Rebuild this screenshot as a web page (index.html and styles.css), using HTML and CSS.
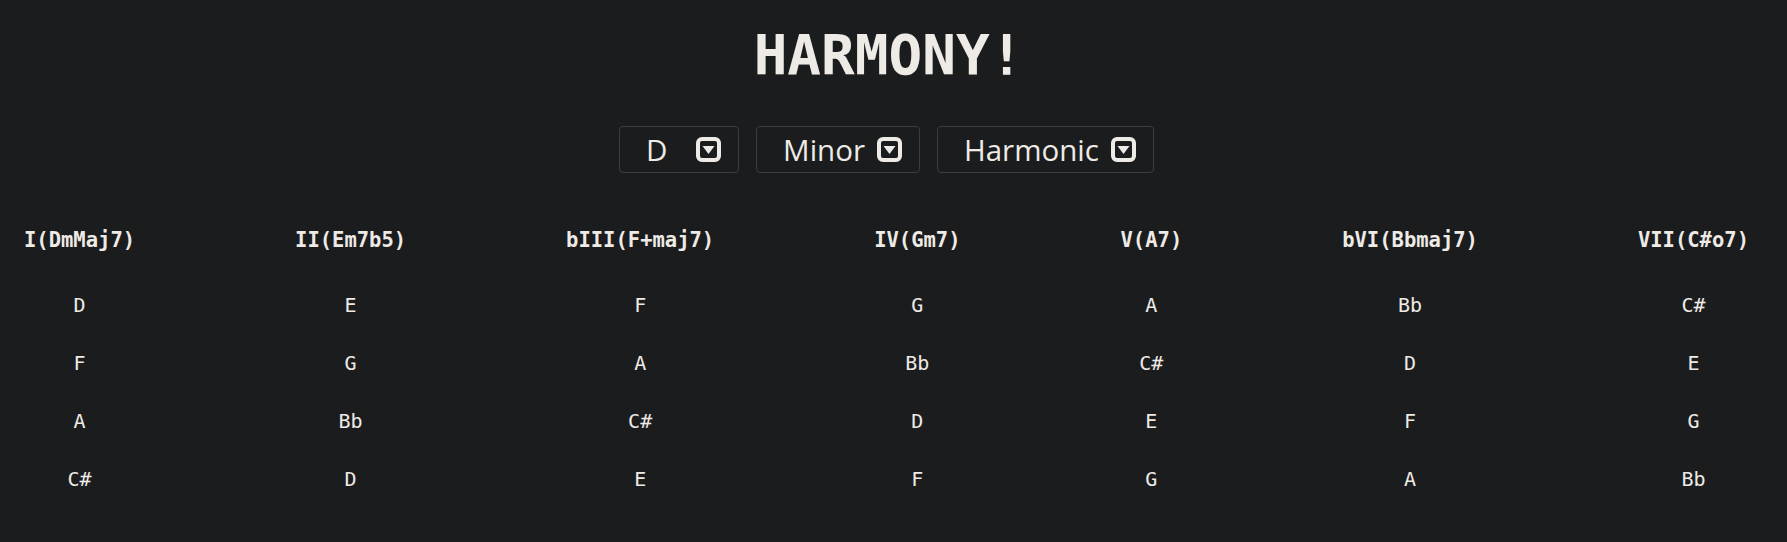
FILE: index.html
```html
<!DOCTYPE html>
<html lang="en">
<head>
<meta charset="utf-8">
<title>HARMONY!</title>
<link rel="stylesheet" href="styles.css">
</head>
<body>
<h1 class="title">HARMONY!</h1>
<div class="controls">
  <div class="select">
    <span class="select-text select-text--key">D</span>
    <svg class="arrow" viewBox="0 0 25 25" width="25" height="25"><rect x="2" y="2" width="21" height="21" rx="4" fill="#1b1c1e" stroke="#eeeae5" stroke-width="4"/><path d="M6.5 9 L18.5 9 L12.5 17 Z" fill="#eeeae5"/></svg>
  </div>
  <div class="select">
    <span class="select-text">Minor</span>
    <svg class="arrow" viewBox="0 0 25 25" width="25" height="25"><rect x="2" y="2" width="21" height="21" rx="4" fill="#1b1c1e" stroke="#eeeae5" stroke-width="4"/><path d="M6.5 9 L18.5 9 L12.5 17 Z" fill="#eeeae5"/></svg>
  </div>
  <div class="select">
    <span class="select-text">Harmonic</span>
    <svg class="arrow" viewBox="0 0 25 25" width="25" height="25"><rect x="2" y="2" width="21" height="21" rx="4" fill="#1b1c1e" stroke="#eeeae5" stroke-width="4"/><path d="M6.5 9 L18.5 9 L12.5 17 Z" fill="#eeeae5"/></svg>
  </div>
</div>
<div class="chords">
  <div class="chord">
    <div class="chord-name">I(DmMaj7)</div>
    <div class="note">D</div><div class="note">F</div><div class="note">A</div><div class="note">C#</div>
  </div>
  <div class="chord">
    <div class="chord-name">II(Em7b5)</div>
    <div class="note">E</div><div class="note">G</div><div class="note">Bb</div><div class="note">D</div>
  </div>
  <div class="chord">
    <div class="chord-name">bIII(F+maj7)</div>
    <div class="note">F</div><div class="note">A</div><div class="note">C#</div><div class="note">E</div>
  </div>
  <div class="chord">
    <div class="chord-name">IV(Gm7)</div>
    <div class="note">G</div><div class="note">Bb</div><div class="note">D</div><div class="note">F</div>
  </div>
  <div class="chord">
    <div class="chord-name">V(A7)</div>
    <div class="note">A</div><div class="note">C#</div><div class="note">E</div><div class="note">G</div>
  </div>
  <div class="chord">
    <div class="chord-name">bVI(Bbmaj7)</div>
    <div class="note">Bb</div><div class="note">D</div><div class="note">F</div><div class="note">A</div>
  </div>
  <div class="chord">
    <div class="chord-name">VII(C#o7)</div>
    <div class="note">C#</div><div class="note">E</div><div class="note">G</div><div class="note">Bb</div>
  </div>
</div>
</body>
</html>
```
FILE: styles.css
```css
html, body {
  margin: 0;
  padding: 0;
  background: #1b1c1e;
  color: #eeeae5;
  font-family: "DejaVu Sans Mono", monospace;
}

body {
  padding-top: 20px;
}

.title {
  margin: 0;
  padding-right: 10px;
  font-size: 56px;
  line-height: 70px;
  font-weight: bold;
  text-align: center;
}

.controls {
  margin-top: 36px;
  display: flex;
  justify-content: center;
  gap: 17px;
  padding-right: 14px;
}

.select {
  height: 47px;
  box-sizing: border-box;
  border: 1px solid #3c3d40;
  border-radius: 4px;
  display: flex;
  align-items: center;
  gap: 12px;
  padding: 0 17px 0 26px;
  font-family: "Open Sans", "Noto Sans", sans-serif;
  font-size: 29.5px;
}

.select-text--key {
  min-width: 38px;
}

.arrow {
  display: block;
  flex: none;
}

.chords {
  margin-top: 52px;
  display: flex;
  justify-content: space-between;
  padding: 0 38px 0 24px;
}

.chord {
  display: flex;
  flex-direction: column;
  align-items: center;
}

.chord-name {
  font-size: 20.5px;
  font-weight: bold;
  line-height: 30px;
  margin-bottom: 21px;
}

.note {
  font-size: 20px;
  line-height: 58px;
}
```
